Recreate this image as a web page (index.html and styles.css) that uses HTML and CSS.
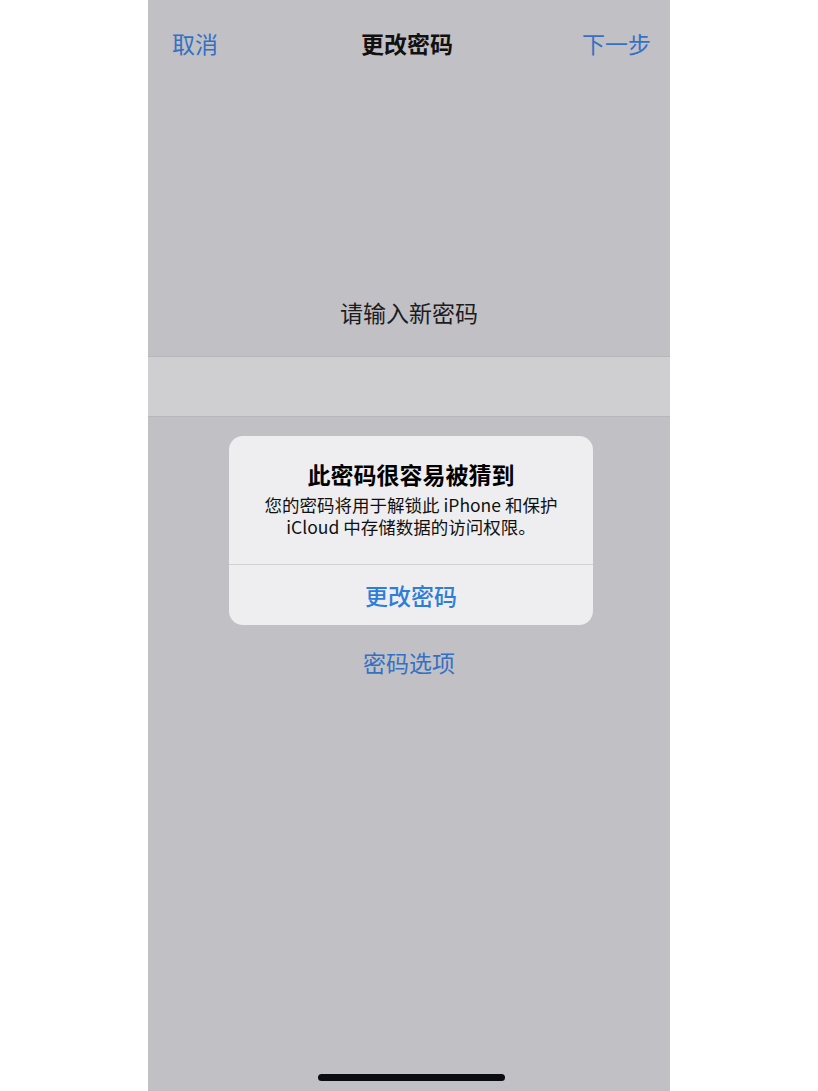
FILE: index.html
```html
<!DOCTYPE html>
<html lang="zh-CN">
<head>
    <meta charset="UTF-8">
    <meta name="viewport" content="width=device-width, initial-scale=1.0">
    <title>更改密码</title>
    <link rel="stylesheet" href="styles.css">
</head>
<body>

    <div class="screen">
        <!-- Navigation bar -->
        <nav class="nav-bar">
            <span class="nav-link">取消</span>
            <span class="nav-title">更改密码</span>
            <span class="nav-link">下一步</span>
        </nav>

        <div class="prompt">请输入新密码</div>
        <div class="passcode-field"></div>

        <div class="options-link">密码选项</div>

        <!-- Alert over the form -->
        <div class="alert">
            <div class="alert-body">
                <div class="alert-title">此密码很容易被猜到</div>
                <div class="alert-message">您的密码将用于解锁此 iPhone 和保护<br>iCloud 中存储数据的访问权限。</div>
            </div>
            <div class="alert-action">更改密码</div>
        </div>

        <div class="home-indicator"></div>
    </div>

</body>
</html>
```

FILE: styles.css
```css
body {
    margin: 0;
    background-color: #ffffff;
    font-family: "Noto Sans CJK SC", "Noto Sans", sans-serif;
}

/* Phone screen, dimmed behind the alert */
.screen {
    position: relative;
    width: 522px;
    height: 1091px;
    margin: 0 auto;
    background-color: #c1c0c5;
    overflow: hidden;
}

/* Navigation bar */
.nav-bar {
    display: flex;
    justify-content: space-between;
    align-items: center;
    height: 86px;
    padding: 0 19px 0 24px;
    font-size: 23px;
}

.nav-link {
    color: #3570c4;
}

.nav-title {
    color: #111111;
    font-weight: bold;
    margin-left: 14px;
}

/* Passcode entry */
.prompt {
    margin-top: 211px;
    text-align: center;
    font-size: 23px;
    line-height: 30px;
    color: #1c1c1e;
}

.passcode-field {
    margin-top: 29px;
    height: 59px;
    background-color: #cfcfd1;
    border-top: 1px solid #b7b7bb;
    border-bottom: 1px solid #b7b7bb;
}

.options-link {
    margin-top: 230px;
    text-align: center;
    font-size: 23px;
    line-height: 30px;
    color: #3570c4;
}

/* Alert */
.alert {
    position: absolute;
    top: 436px;
    left: 81px;
    width: 364px;
    background-color: #eeeef0;
    border-radius: 14px;
    text-align: center;
    overflow: hidden;
}

.alert-body {
    padding: 24px 12px 26px;
}

.alert-title {
    font-size: 23px;
    font-weight: bold;
    line-height: 28px;
    color: #000000;
    margin-bottom: 6px;
}

.alert-message {
    font-size: 17.5px;
    line-height: 22px;
    color: #111111;
}

.alert-action {
    border-top: 1px solid #d2d2d6;
    height: 60px;
    line-height: 60px;
    font-size: 23px;
    font-weight: 500;
    color: #2f7dda;
}

/* Home indicator */
.home-indicator {
    position: absolute;
    bottom: 10px;
    left: 170px;
    width: 187px;
    height: 7px;
    border-radius: 4px;
    background-color: #0b0b12;
}
```
